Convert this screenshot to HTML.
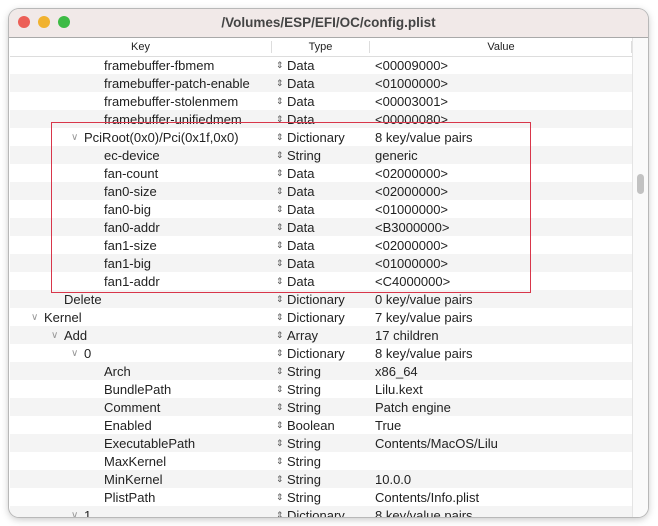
<!DOCTYPE html><html><head><style>
body{margin:0;width:658px;height:526px;background:#fff;font-family:"Liberation Sans",sans-serif;overflow:hidden;position:relative}
.win{position:absolute;left:9px;top:9px;width:639px;height:508px;border-radius:10px;overflow:hidden;box-shadow:0 0 0 1px #b8b8b8,0 2px 8px rgba(0,0,0,.25);background:#fff}
.tb{height:28px;background:#f1e9e8;border-bottom:1px solid #a9a9a9;position:relative}
.tb .t{position:absolute;left:0;right:0;top:6px;text-align:center;font-weight:bold;font-size:13.5px;color:#444}
.d{position:absolute;top:7px;width:12px;height:12px;border-radius:50%}
.hd{position:absolute;top:29px;left:1px;width:622px;height:18px;border-bottom:1px solid #ddd;font-size:11px;color:#222;background:#fff}
.hd span{position:absolute;top:3px;text-align:center}
.sep{position:absolute;top:3px;width:1px;height:12px;background:#ddd}
.row{position:absolute;left:1px;width:622px;height:18px;font-size:13px;color:#222;line-height:19px}
.row.g{background:#f4f4f4}
.row span{position:absolute;white-space:nowrap}
.ar{color:#999;font-size:10px}
.sb{position:absolute;left:623px;top:29px;width:16px;height:479px;background:#fafafa;border-left:1px solid #e4e4e4}
</style></head><body>
<div class="win">
<div class="tb"><div class="d" style="left:9px;background:#ec5f57"></div><div class="d" style="left:29px;background:#f1b22f"></div><div class="d" style="left:49px;background:#3dbb45"></div><div class="t">/Volumes/ESP/EFI/OC/config.plist</div></div>
<div class="hd"><span style="left:0;width:261px">Key</span><div class="sep" style="left:261px"></div><span style="left:262px;width:97px">Type</span><div class="sep" style="left:359px"></div><span style="left:360px;width:262px">Value</span><div class="sep" style="left:621px"></div></div>
<div id="rows"></div>
<div class="sb"><div style="position:absolute;left:4px;top:136px;width:7px;height:20px;border-radius:4px;background:#c2c2c2"></div></div>
<div style="position:absolute;left:42px;top:113px;width:480px;height:171px;border:1px solid #d8364a;box-sizing:border-box"></div>
</div>
<script>
var R=[[4,'framebuffer-fbmem','Data','<00009000>'],[4,'framebuffer-patch-enable','Data','<01000000>'],[4,'framebuffer-stolenmem','Data','<00003001>'],[4,'framebuffer-unifiedmem','Data','<00000080>'],[3,'PciRoot(0x0)/Pci(0x1f,0x0)','Dictionary','8 key/value pairs',1],[4,'ec-device','String','generic'],[4,'fan-count','Data','<02000000>'],[4,'fan0-size','Data','<02000000>'],[4,'fan0-big','Data','<01000000>'],[4,'fan0-addr','Data','<B3000000>'],[4,'fan1-size','Data','<02000000>'],[4,'fan1-big','Data','<01000000>'],[4,'fan1-addr','Data','<C4000000>'],[2,'Delete','Dictionary','0 key/value pairs'],[1,'Kernel','Dictionary','7 key/value pairs',1],[2,'Add','Array','17 children',1],[3,'0','Dictionary','8 key/value pairs',1],[4,'Arch','String','x86_64'],[4,'BundlePath','String','Lilu.kext'],[4,'Comment','String','Patch engine'],[4,'Enabled','Boolean','True'],[4,'ExecutablePath','String','Contents/MacOS/Lilu'],[4,'MaxKernel','String',''],[4,'MinKernel','String','10.0.0'],[4,'PlistPath','String','Contents/Info.plist'],[3,'1','Dictionary','8 key/value pairs',1]];
var h='';R.forEach(function(r,i){var x=r[0]*20+14;var esc=function(s){return s.replace(/</g,'&lt;').replace(/>/g,'&gt;')};
h+='<div class="row'+(i%2?' g':'')+'" style="top:'+(47+18*i)+'px">'+(r[4]?'<span class="ar" style="left:'+(x-13)+'px">&#8744;</span>':'')+'<span style="left:'+x+'px">'+esc(r[1])+'</span><span style="left:266px;font-size:9px;color:#555">&#8661;</span><span style="left:277px">'+r[2]+'</span><span style="left:365px">'+esc(r[3])+'</span></div>';});
document.getElementById('rows').innerHTML=h;
</script>
</body></html>
